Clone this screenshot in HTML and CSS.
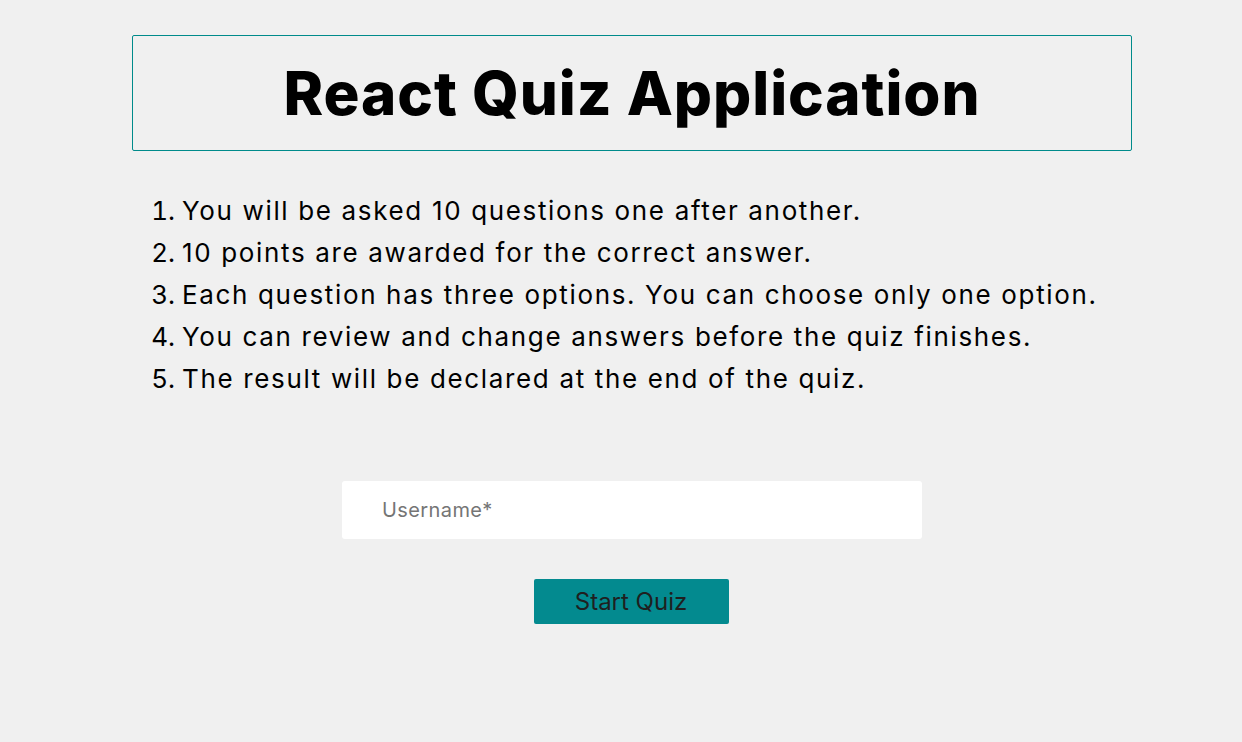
FILE: index.html
```html
<!DOCTYPE html>
<html lang="en">
<head>
<meta charset="utf-8">
<title>React Quiz Application</title>
<link rel="stylesheet" href="styles.css">
</head>
<body>
  <main class="app">
    <header class="title-box">
      <h1 class="title">React Quiz Application</h1>
    </header>
    <ol class="rules">
      <li>You will be asked 10 questions one after another.</li>
      <li>10 points are awarded for the correct answer.</li>
      <li>Each question has three options. You can choose only one option.</li>
      <li>You can review and change answers before the quiz finishes.</li>
      <li>The result will be declared at the end of the quiz.</li>
    </ol>
    <form class="start-form">
      <input class="username" type="text" placeholder="Username*">
      <button class="start-btn" type="button">Start Quiz</button>
    </form>
  </main>
</body>
</html>
```

FILE: styles.css
```css
html, body {
  margin: 0;
  padding: 0;
  background: #f0f0f0;
}

body {
  font-family: "Inter", "Open Sans", sans-serif;
  color: #000;
}

.app {
  width: 1000px;
  margin: 35px 0 0 132px;
}

.title-box {
  border: 1px solid #008b8b;
  border-radius: 2px;
  height: 114px;
  display: flex;
  align-items: center;
  justify-content: center;
}

.title {
  margin: 0;
  font-size: 60px;
  font-weight: 800;
  letter-spacing: 0.95px;
  line-height: 1;
}

.rules {
  margin: 39px 0 0 0;
  padding-left: 50px;
  font-size: 26px;
  line-height: 42px;
  letter-spacing: 1.65px;
}

.rules li::marker {
  letter-spacing: 0;
}

.start-form {
  display: flex;
  flex-direction: column;
  align-items: center;
  margin-top: 81px;
}

.username {
  box-sizing: border-box;
  width: 580px;
  height: 58px;
  border: none;
  border-radius: 3px;
  background: #fff;
  padding: 0 40px;
  font-family: inherit;
  font-size: 20px;
  letter-spacing: 0.4px;
  outline: none;
}

.username::placeholder {
  color: #757575;
}

.start-btn {
  margin-top: 40px;
  margin-right: 2px;
  width: 195px;
  height: 45px;
  border: none;
  border-radius: 2px;
  background: #038a8f;
  color: #1f1f1f;
  font-family: inherit;
  font-size: 24px;
  cursor: pointer;
}
```
